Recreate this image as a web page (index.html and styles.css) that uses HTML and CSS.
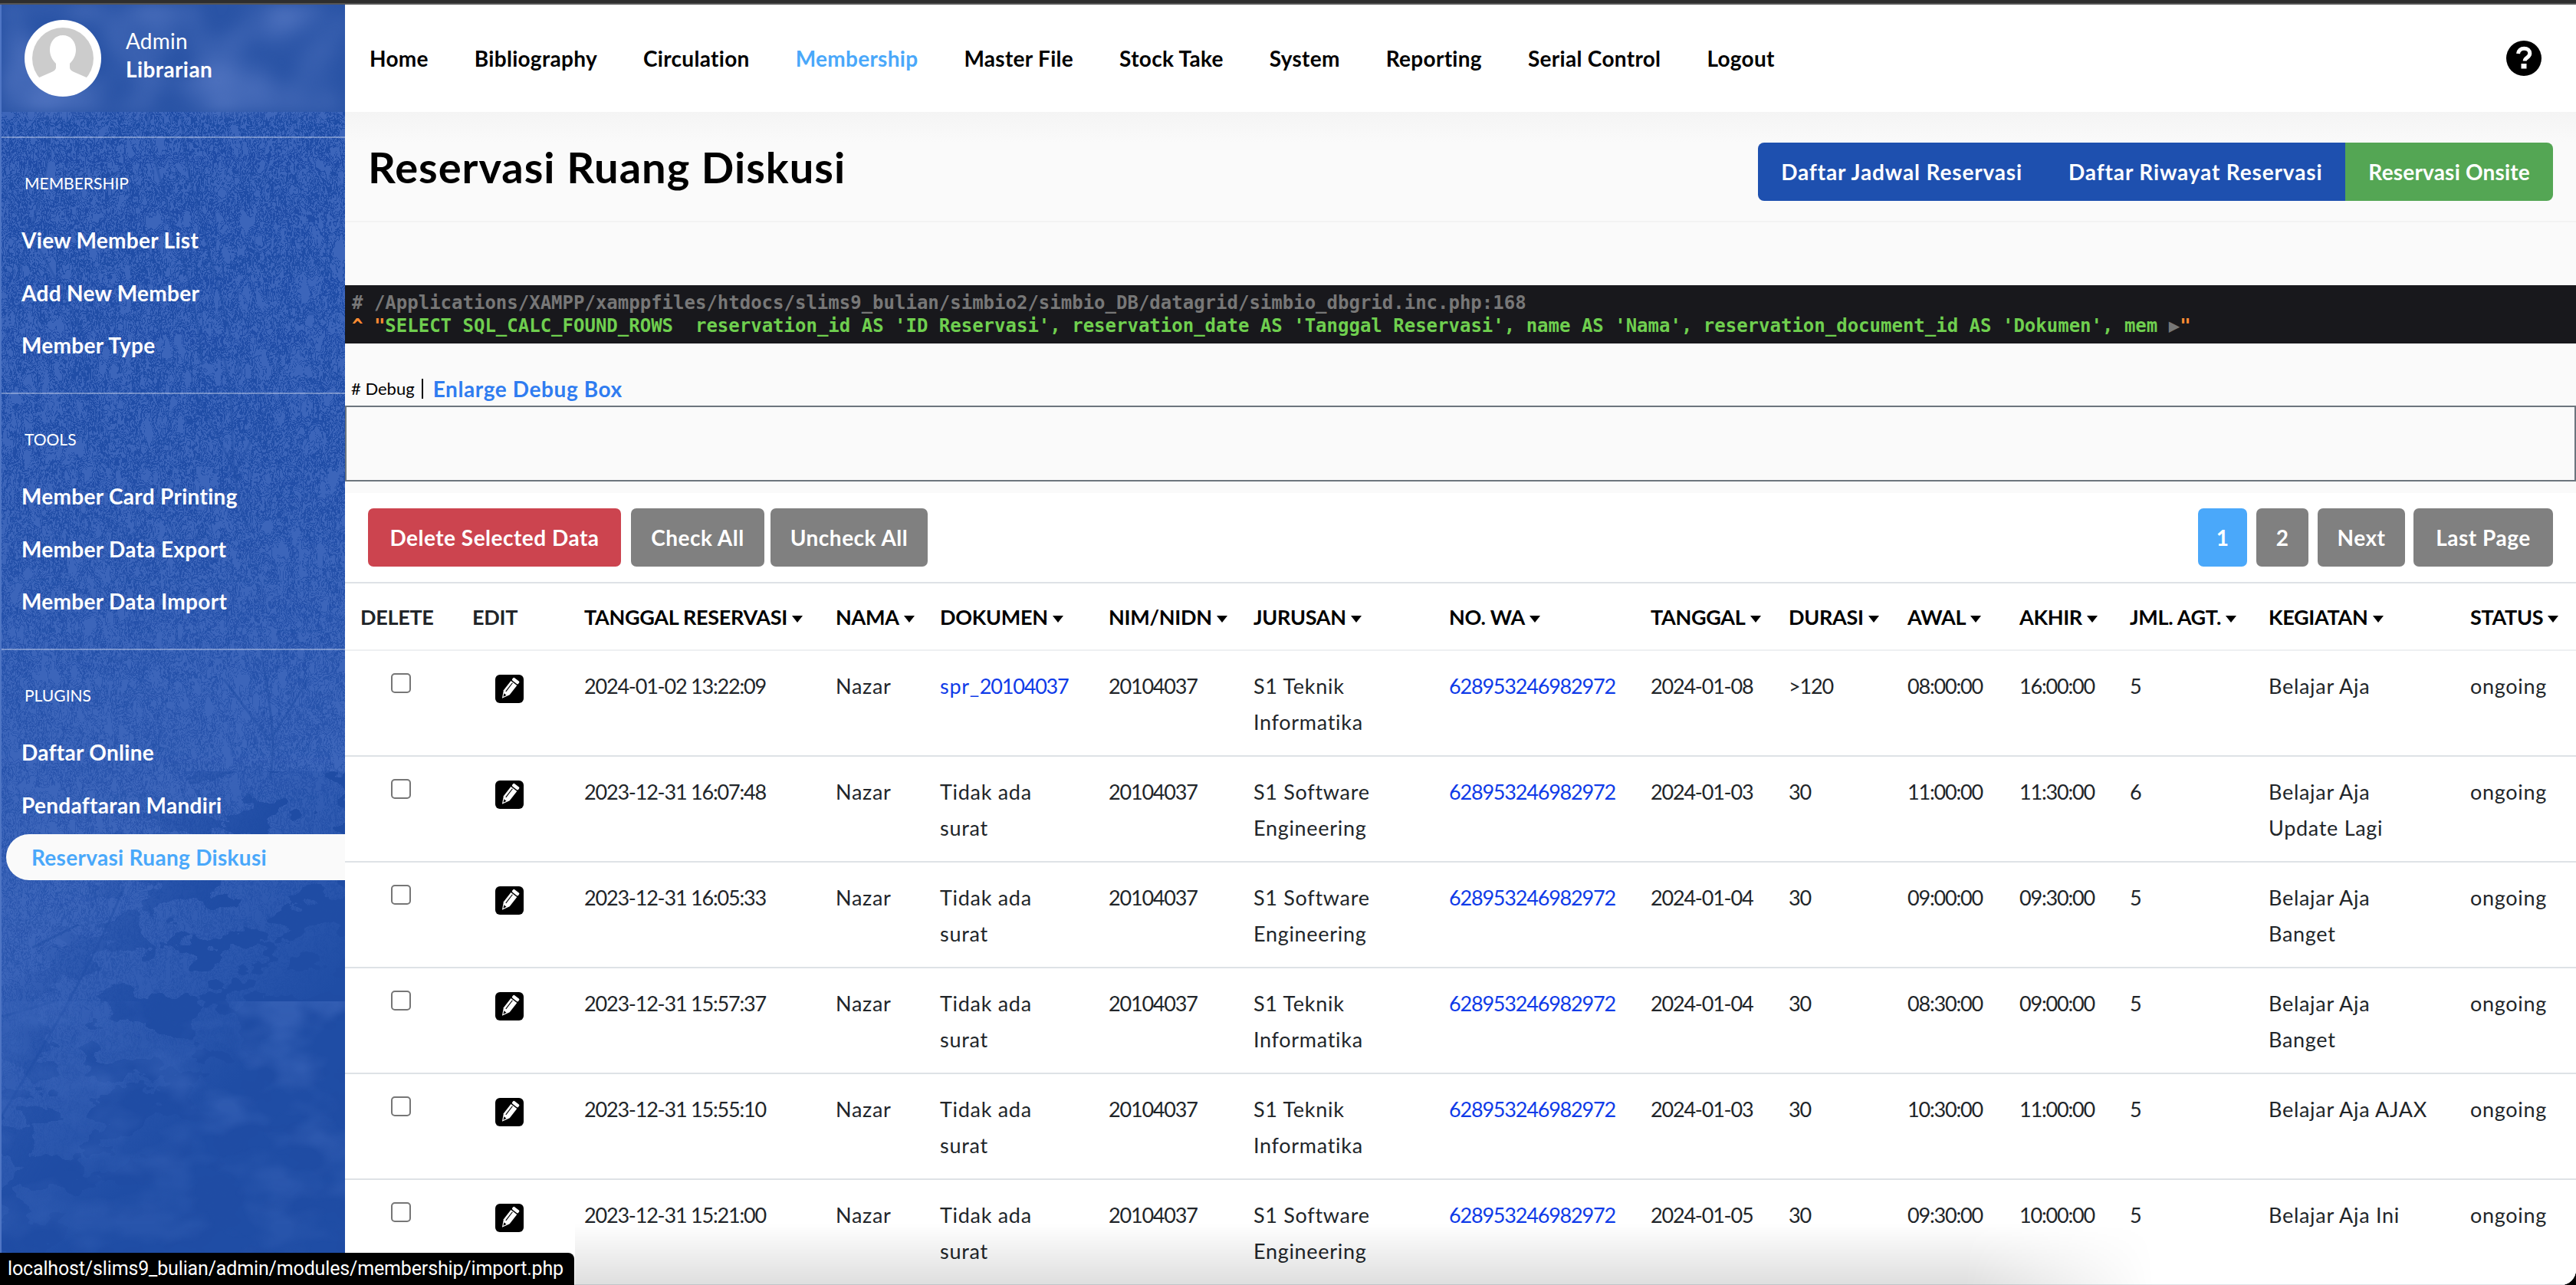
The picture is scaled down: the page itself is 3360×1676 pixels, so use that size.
FILE: index.html
```html
<!DOCTYPE html>
<html lang="en">
<head>
  <meta charset="UTF-8" />
  <title>Reservasi Ruang Diskusi</title>
  <link rel="stylesheet" href="styles.css">
</head>
<body>

<div class="topline"></div>

<div class="app">

  <aside class="sidebar">
    <svg class="side-bg" width="450" height="1670" viewBox="0 0 450 1670" aria-hidden="true">
      <defs>
        <filter id="twigs" x="0" y="0" width="100%" height="100%" color-interpolation-filters="sRGB">
          <feTurbulence type="fractalNoise" baseFrequency="0.04 0.02" numOctaves="4" seed="11"/>
          <feColorMatrix type="matrix" values="0 0 0 0 0.12  0 0 0 0 0.30  0 0 0 0 0.65  1.6 0 0 0 -0.3"/>
          <feComponentTransfer><feFuncA type="discrete" tableValues="0 0 0 0 0 0 0 1 0 1 0 0 1 0 1 0 0 1 0 0 0 0 0 0"/></feComponentTransfer>
        </filter>
        <filter id="twigs2" x="0" y="0" width="100%" height="100%" color-interpolation-filters="sRGB">
          <feTurbulence type="fractalNoise" baseFrequency="0.08 0.03" numOctaves="3" seed="23"/>
          <feColorMatrix type="matrix" values="0 0 0 0 0.12  0 0 0 0 0.30  0 0 0 0 0.65  1.6 0 0 0 -0.3"/>
          <feComponentTransfer><feFuncA type="discrete" tableValues="0 0 0 0 0 0 0 0 1 0 0 1 0 0 1 0 0 0 0 0 0 0 0 0"/></feComponentTransfer>
        </filter>
        <filter id="rock" x="0" y="0" width="100%" height="100%" color-interpolation-filters="sRGB">
          <feTurbulence type="fractalNoise" baseFrequency="0.016 0.024" numOctaves="4" seed="5"/>
          <feColorMatrix type="matrix" values="0 0 0 0 0.12  0 0 0 0 0.30  0 0 0 0 0.645  2.4 0 0 0 -0.75"/>
          <feComponentTransfer><feFuncA type="discrete" tableValues="0 0 0 0 1 1 1 1"/></feComponentTransfer>
        </filter>
        <filter id="swirl" x="0" y="0" width="100%" height="100%" color-interpolation-filters="sRGB">
          <feTurbulence type="fractalNoise" baseFrequency="0.012 0.018" numOctaves="3" seed="8"/>
          <feColorMatrix type="matrix" values="0 0 0 0 0.235  0 0 0 0 0.40  0 0 0 0 0.73  3 0 0 0 -1.3"/>
        </filter>
        <filter id="blotch" x="0" y="0" width="100%" height="100%" color-interpolation-filters="sRGB">
          <feTurbulence type="fractalNoise" baseFrequency="0.012" numOctaves="2" seed="3"/>
          <feColorMatrix type="matrix" values="0 0 0 0 0.30  0 0 0 0 0.44  0 0 0 0 0.74  2.4 0 0 0 -0.9"/>
        </filter>
        <linearGradient id="fadeTwigs" x1="0" y1="0" x2="0" y2="1">
          <stop offset="0" stop-color="#fff"/>
          <stop offset="0.35" stop-color="#fff" stop-opacity="0.9"/>
          <stop offset="0.55" stop-color="#fff" stop-opacity="0.55"/>
          <stop offset="0.8" stop-color="#fff" stop-opacity="0.35"/>
          <stop offset="1" stop-color="#fff" stop-opacity="0"/>
        </linearGradient>
        <linearGradient id="fadeRock" gradientUnits="userSpaceOnUse" x1="100" y1="1120" x2="260" y2="1220">
          <stop offset="0" stop-color="#fff" stop-opacity="0"/>
          <stop offset="1" stop-color="#fff"/>
        </linearGradient>
        <linearGradient id="fadeSwirl" gradientUnits="userSpaceOnUse" x1="0" y1="1300" x2="0" y2="1670">
          <stop offset="0" stop-color="#fff" stop-opacity="0.7"/>
          <stop offset="1" stop-color="#fff" stop-opacity="0.2"/>
        </linearGradient>
        <linearGradient id="deep" gradientUnits="userSpaceOnUse" x1="60" y1="1180" x2="290" y2="1420">
          <stop offset="0" stop-color="#1f4da5" stop-opacity="0"/>
          <stop offset="0.55" stop-color="#1f4da5" stop-opacity="0.45"/>
          <stop offset="1" stop-color="#1f4da5"/>
        </linearGradient>
        <mask id="maskTwigs"><rect width="450" height="1670" fill="url(#fadeTwigs)"/></mask>
        <mask id="maskRock"><rect width="450" height="1670" fill="url(#fadeRock)"/></mask>
        <mask id="maskSwirl"><rect width="450" height="1670" fill="url(#fadeSwirl)"/></mask>
      </defs>
      <rect width="450" height="1670" fill="#3c65ba"/>
      <rect y="140" width="450" height="1530" filter="url(#twigs)" mask="url(#maskTwigs)"/>
      <rect y="140" width="450" height="1530" filter="url(#twigs2)" mask="url(#maskTwigs)"/>
      <g class="trunks">
        <path d="M190 146C200 240 250 330 262 470M235 146C240 240 270 300 300 440"/>
        <path d="M0 240C40 300 80 370 110 440M60 146C70 230 30 300 20 360"/>
        <path d="M290 460C310 540 290 600 320 680M250 500L310 620M350 520L300 620"/>
        <path d="M340 850C350 920 360 960 350 1010M290 880L350 960M400 880L350 960"/>
        <path d="M160 1150C120 1250 60 1350 0 1450M100 1200L40 1230M70 1300L0 1320"/>
      </g>
      <rect y="1000" width="450" height="670" fill="url(#deep)"/>
      <rect y="1000" width="450" height="670" filter="url(#rock)" mask="url(#maskRock)"/>
      <rect y="1300" width="450" height="370" filter="url(#swirl)" mask="url(#maskSwirl)"/>
    </svg>

    <div class="profile">
      <svg class="profile-bg" width="450" height="140" aria-hidden="true">
        <rect width="450" height="140" filter="url(#blotch)"/>
      </svg>
      <svg class="avatar" width="100" height="100" viewBox="0 0 100 100">
        <circle cx="50" cy="50" r="50" fill="#fff"/>
        <circle cx="50" cy="50" r="40" fill="#ccc"/>
        <path d="M50 20c-10 0-17 8-17 19 0 7 3 13 8 18v5c0 3-3 5-8 7l-16 7a40 40 0 0 0 66 0l-16-7c-5-2-8-4-8-7v-5c5-5 8-11 8-18 0-11-7-19-17-19z" fill="#fff"/>
      </svg>
      <div class="profile-text">
        <div class="profile-name">Admin</div>
        <div class="profile-role">Librarian</div>
      </div>
    </div>

    <div class="side-groups">
      <div class="side-group">
        <div class="side-label">MEMBERSHIP</div>
        <a class="side-link">View Member List</a>
        <a class="side-link">Add New Member</a>
        <a class="side-link">Member Type</a>
      </div>
      <div class="side-group">
        <div class="side-label">TOOLS</div>
        <a class="side-link">Member Card Printing</a>
        <a class="side-link">Member Data Export</a>
        <a class="side-link">Member Data Import</a>
      </div>
      <div class="side-group">
        <div class="side-label">PLUGINS</div>
        <a class="side-link">Daftar Online</a>
        <a class="side-link">Pendaftaran Mandiri</a>
        <a class="side-link active">Reservasi Ruang Diskusi</a>
      </div>
    </div>
  </aside>

  <main class="main">

    <nav class="navbar">
      <a>Home</a>
      <a>Bibliography</a>
      <a>Circulation</a>
      <a class="active">Membership</a>
      <a>Master File</a>
      <a>Stock Take</a>
      <a>System</a>
      <a>Reporting</a>
      <a>Serial Control</a>
      <a>Logout</a>
      <svg class="help" width="46" height="46" viewBox="0 0 46 46">
        <circle cx="23" cy="23" r="23" fill="#000"/>
        <path d="M15.5 17c.6-4.500 3.800-6.800 7.800-6.800 4.300 0 7.500 2.600 7.500 6.300 0 3-1.800 4.400-3.600 5.700-1.700 1.200-3 2-3 4.300" fill="none" stroke="#fff" stroke-width="5"/>
        <rect x="19.500" y="30" width="7" height="6.500" fill="#fff"/>
      </svg>
    </nav>

    <header class="page-head">
      <h1>Reservasi Ruang Diskusi</h1>
      <div class="btn-group">
        <a class="btn-tab">Daftar Jadwal Reservasi</a>
        <a class="btn-tab">Daftar Riwayat Reservasi</a>
        <a class="btn-tab green">Reservasi Onsite</a>
      </div>
    </header>

    <pre class="dump"><span class="d-gray"># /Applications/XAMPP/xamppfiles/htdocs/slims9_bulian/simbio2/simbio_DB/datagrid/simbio_dbgrid.inc.php:168</span>
<span class="d-orange">^ "</span><span class="d-green">SELECT SQL_CALC_FOUND_ROWS  reservation_id AS 'ID Reservasi', reservation_date AS 'Tanggal Reservasi', name AS 'Nama', reservation_document_id AS 'Dokumen', mem </span><span class="d-gray">▶</span><span class="d-orange">"</span></pre>

    <div class="debug-head">
      <span class="debug-name"># Debug</span>
      <a class="debug-link">Enlarge Debug Box</a>
    </div>
    <div class="debug-box"></div>

    <section class="grid-wrap">
      <div class="toolbar">
        <div class="tools-left">
          <a class="btn red w-delete">Delete Selected Data</a>
          <a class="btn gray w-check">Check All</a>
          <a class="btn gray w-uncheck">Uncheck All</a>
        </div>
        <div class="pager">
          <a class="btn blue w-p1">1</a>
          <a class="btn gray w-p2">2</a>
          <a class="btn gray w-next">Next</a>
          <a class="btn gray w-last">Last Page</a>
        </div>
      </div>

      <table class="grid">
        <colgroup>
          <col class="c-del"><col class="c-edit"><col class="c-res"><col class="c-nama"><col class="c-dok">
          <col class="c-nim"><col class="c-jur"><col class="c-wa"><col class="c-tgl"><col class="c-dur">
          <col class="c-awal"><col class="c-akhir"><col class="c-jml"><col class="c-keg"><col class="c-stat">
        </colgroup>
        <thead>
          <tr>
            <th class="plain">DELETE</th>
            <th class="plain">EDIT</th>
            <th class="sort">TANGGAL RESERVASI</th>
            <th class="sort">NAMA</th>
            <th class="sort">DOKUMEN</th>
            <th class="sort">NIM/NIDN</th>
            <th class="sort">JURUSAN</th>
            <th class="sort">NO. WA</th>
            <th class="sort">TANGGAL</th>
            <th class="sort">DURASI</th>
            <th class="sort">AWAL</th>
            <th class="sort">AKHIR</th>
            <th class="sort">JML. AGT.</th>
            <th class="sort">KEGIATAN</th>
            <th class="sort">STATUS</th>
          </tr>
        </thead>
        <tbody>
          <tr>
            <td><input type="checkbox" class="check"></td>
            <td><svg class="edit" viewBox="0 0 37 37"><use href="#pencil"/></svg></td>
            <td class="num">2024-01-02 13:22:09</td><td>Nazar</td><td><a class="link">spr_<span class="num">20104037</span></a></td><td class="num">20104037</td>
            <td>S1 Teknik Informatika</td><td class="num"><a class="link">628953246982972</a></td><td class="num">2024-01-08</td><td class="num">&gt;120</td>
            <td class="num">08:00:00</td><td class="num">16:00:00</td><td class="num">5</td><td>Belajar Aja</td><td>ongoing</td>
          </tr>
          <tr>
            <td><input type="checkbox" class="check"></td>
            <td><svg class="edit" viewBox="0 0 37 37"><use href="#pencil"/></svg></td>
            <td class="num">2023-12-31 16:07:48</td><td>Nazar</td><td>Tidak ada surat</td><td class="num">20104037</td>
            <td>S1 Software Engineering</td><td class="num"><a class="link">628953246982972</a></td><td class="num">2024-01-03</td><td class="num">30</td>
            <td class="num">11:00:00</td><td class="num">11:30:00</td><td class="num">6</td><td>Belajar Aja Update Lagi</td><td>ongoing</td>
          </tr>
          <tr>
            <td><input type="checkbox" class="check"></td>
            <td><svg class="edit" viewBox="0 0 37 37"><use href="#pencil"/></svg></td>
            <td class="num">2023-12-31 16:05:33</td><td>Nazar</td><td>Tidak ada surat</td><td class="num">20104037</td>
            <td>S1 Software Engineering</td><td class="num"><a class="link">628953246982972</a></td><td class="num">2024-01-04</td><td class="num">30</td>
            <td class="num">09:00:00</td><td class="num">09:30:00</td><td class="num">5</td><td>Belajar Aja Banget</td><td>ongoing</td>
          </tr>
          <tr>
            <td><input type="checkbox" class="check"></td>
            <td><svg class="edit" viewBox="0 0 37 37"><use href="#pencil"/></svg></td>
            <td class="num">2023-12-31 15:57:37</td><td>Nazar</td><td>Tidak ada surat</td><td class="num">20104037</td>
            <td>S1 Teknik Informatika</td><td class="num"><a class="link">628953246982972</a></td><td class="num">2024-01-04</td><td class="num">30</td>
            <td class="num">08:30:00</td><td class="num">09:00:00</td><td class="num">5</td><td>Belajar Aja Banget</td><td>ongoing</td>
          </tr>
          <tr>
            <td><input type="checkbox" class="check"></td>
            <td><svg class="edit" viewBox="0 0 37 37"><use href="#pencil"/></svg></td>
            <td class="num">2023-12-31 15:55:10</td><td>Nazar</td><td>Tidak ada surat</td><td class="num">20104037</td>
            <td>S1 Teknik Informatika</td><td class="num"><a class="link">628953246982972</a></td><td class="num">2024-01-03</td><td class="num">30</td>
            <td class="num">10:30:00</td><td class="num">11:00:00</td><td class="num">5</td><td>Belajar Aja AJAX</td><td>ongoing</td>
          </tr>
          <tr>
            <td><input type="checkbox" class="check"></td>
            <td><svg class="edit" viewBox="0 0 37 37"><use href="#pencil"/></svg></td>
            <td class="num">2023-12-31 15:21:00</td><td>Nazar</td><td>Tidak ada surat</td><td class="num">20104037</td>
            <td>S1 Software Engineering</td><td class="num"><a class="link">628953246982972</a></td><td class="num">2024-01-05</td><td class="num">30</td>
            <td class="num">09:30:00</td><td class="num">10:00:00</td><td class="num">5</td><td>Belajar Aja Ini</td><td>ongoing</td>
          </tr>
        </tbody>
      </table>
    </section>
  </main>
</div>

<svg class="sprite" width="0" height="0" aria-hidden="true">
  <symbol id="pencil" viewBox="0 0 37 37">
    <rect width="37" height="37" rx="6" fill="#000"/>
    <g transform="rotate(38 18.500 18.500)">
      <rect x="13.500" y="3" width="10" height="4.500" rx="1.500" fill="#fff"/>
      <path d="M13.500 9h10v15.500l-5 9.500-5-9.500z" fill="#fff"/>
      <path d="M16.800 10v14" stroke="#000" stroke-width="1.200"/>
      <path d="M16.500 27.500h4l-2 4z" fill="#000"/>
    </g>
  </symbol>
</svg>

<div class="bottom-shade"></div>
<div class="status-tip">localhost/slims9_bulian/admin/modules/membership/import.php</div>

</body>
</html>
```

FILE: styles.css
```css
html, body {
  margin: 0; padding: 0;
  width: 3360px; height: 1676px;
  overflow: hidden;
  background: #000;
  font-family: "Lato", "Open Sans", sans-serif;
  color: #212529;
}
a { text-decoration: none; color: inherit; }
.sprite { position: absolute; }

.topline {
  height: 4px;
  background: #2e2e2e;
  border-bottom: 2px solid #555;
}
.app {
  display: flex;
  height: 1670px;
  background: #fff;
  border-bottom-right-radius: 20px;
  overflow: hidden;
}

/* sidebar */
.sidebar {
  width: 450px;
  flex: none;
  position: relative;
  color: #fff;
  overflow: hidden;
  border-left: 2px solid #4f75c4;
  box-sizing: border-box;
}
.side-bg { position: absolute; left: 0; top: 0; }
.trunks path { fill: none; stroke: #1f4da5; stroke-width: 3; opacity: .5; }

.profile {
  position: relative;
  height: 140px;
  display: flex;
  align-items: center;
  padding-left: 30px;
  gap: 32px;
  box-sizing: border-box;
  background: #2a54a6;
}
.profile-bg { position: absolute; left: 0; top: 0; filter: blur(8px); }
.avatar, .profile-text { position: relative; }
.profile-text { padding-bottom: 8px; }
.profile-name { font-size: 28px; line-height: 37px; font-weight: 400; letter-spacing: .2px; }
.profile-role { font-size: 28px; line-height: 37px; font-weight: 700; letter-spacing: .4px; }

.side-groups { position: relative; padding-top: 32px; }
.side-group {
  height: 334px;
  box-sizing: border-box;
  padding-top: 34px;
  border-top: 2px solid rgba(255,255,255,.35);
}
.side-label {
  font-size: 21px;
  line-height: 50px;
  padding-left: 30px;
  margin-bottom: 19px;
}
.side-link {
  display: block;
  font-size: 28px;
  font-weight: 700;
  letter-spacing: .3px;
  line-height: 60px;
  height: 60px;
  margin-bottom: 8.500px;
  padding-left: 26px;
}
.side-link.active {
  margin-left: 6px;
  padding-left: 33px;
  background: #fafafa;
  color: #4aa8fa;
  border-radius: 30px 0 0 30px;
}

/* main column */
.main {
  flex: 1;
  min-width: 0;
  background: #fafafa;
}

.navbar {
  height: 140px;
  background: #fff;
  display: flex;
  align-items: center;
  gap: 60px;
  padding: 0 45px 0 32px;
  box-sizing: border-box;
  font-size: 28px;
  font-weight: 700;
  letter-spacing: .3px;
  color: #000;
}
.navbar .active { color: #4aa8fa; }
.navbar .help { margin-left: auto; }

.page-head {
  height: 144px;
  box-sizing: border-box;
  padding: 40px 30px 0;
  display: flex;
  justify-content: space-between;
  align-items: flex-start;
  border-bottom: 2px solid #f3f3f3;
  background: linear-gradient(#f4f4f4, #fafafa 40px);
}
.page-head h1 {
  margin: 0;
  font-size: 56px;
  line-height: 64px;
  font-weight: 700;
  letter-spacing: 1px;
  color: #000;
}
.btn-group { display: flex; height: 76px; border-radius: 8px; overflow: hidden; }
.btn-tab {
  display: flex;
  align-items: center;
  padding: 0 30px;
  background: #1e50af;
  color: #fff;
  font-size: 28px;
  font-weight: 700;
  letter-spacing: .86px;
}
.btn-tab.green { background: #54a654; letter-spacing: .2px; }

.dump {
  margin: 82px 0 0;
  height: 76px;
  box-sizing: border-box;
  padding: 8px 9px;
  background: #18181c;
  font-family: "DejaVu Sans Mono", monospace;
  font-weight: 700;
  font-size: 24px;
  line-height: 30px;
  white-space: pre;
  overflow: hidden;
}
.d-gray { color: #777; }
.d-orange { color: #ff8c33; }
.d-green { color: #6fcf4f; }

.debug-head {
  height: 81px;
  box-sizing: border-box;
  padding: 38px 0 2px 8px;
  display: flex;
  align-items: center;
}
.debug-name {
  font-size: 22px;
  color: #000;
  padding-right: 9px;
  border-right: 2px solid #000;
  line-height: 26px;
  margin-right: 13px;
}
.debug-link { font-size: 28px; font-weight: 700; letter-spacing: .6px; color: #2f7cf0; }
.debug-box {
  height: 99px;
  box-sizing: border-box;
  border: 2px solid #6c757d;
  margin-bottom: 15px;
}

.grid-wrap { background: #fff; }
.toolbar {
  display: flex;
  justify-content: space-between;
  padding: 20px 30px;
  height: 116px;
  box-sizing: border-box;
}
.tools-left, .pager { display: flex; }
.btn {
  display: flex;
  align-items: center;
  justify-content: center;
  height: 76px;
  border-radius: 7px;
  color: #fff;
  font-size: 28px;
  font-weight: 700;
  letter-spacing: .5px;
}
.red { background: #cc444f; }
.gray { background: #808080; }
.blue { background: #4aa8fa; }
.w-delete { width: 330px; margin-right: 13px; }
.w-check { width: 174px; margin-right: 8px; }
.w-uncheck { width: 205px; }
.w-p1 { width: 64px; margin-right: 12px; }
.w-p2 { width: 68px; margin-right: 12px; }
.w-next { width: 114px; margin-right: 11px; }
.w-last { width: 182px; }

/* datagrid */
.grid {
  table-layout: fixed;
  width: 2910px;
  border-collapse: separate;
  border-spacing: 0;
  font-size: 27px;
  letter-spacing: .7px;
}
.c-del { width: 146px; } .c-edit { width: 146px; } .c-res { width: 328px; }
.c-nama { width: 136px; } .c-dok { width: 220px; } .c-nim { width: 189px; }
.c-jur { width: 255px; } .c-wa { width: 263px; } .c-tgl { width: 180px; }
.c-dur { width: 155px; } .c-awal { width: 146px; } .c-akhir { width: 144px; }
.c-jml { width: 181px; } .c-keg { width: 263px; } .c-stat { width: 158px; }

.grid th {
  height: 90px;
  box-sizing: border-box;
  padding: 0 20px;
  text-align: left;
  font-weight: 700;
  letter-spacing: -.3px;
  color: #000;
  white-space: nowrap;
  border-top: 2px solid #dee2e6;
  border-bottom: 2px solid #eef0f2;
}
.grid th.plain { color: #212529; }
.sort::after {
  content: "";
  display: inline-block;
  margin-left: 6px;
  vertical-align: 3px;
  border-left: 7px solid transparent;
  border-right: 7px solid transparent;
  border-top: 9px solid #000;
}
.grid td {
  height: 138px;
  box-sizing: border-box;
  padding: 22px 20px 20px;
  line-height: 47px;
  vertical-align: top;
  border-bottom: 2px solid #dee2e6;
}
.num { letter-spacing: -1.2px; white-space: nowrap; }
.link { color: #0f3be8; }
.check {
  appearance: none;
  display: block;
  width: 26px; height: 26px;
  margin: 7px auto 0;
  background: #fff;
  border: 2px solid #767676;
  border-radius: 5px;
  box-sizing: border-box;
}
.edit { display: block; width: 37px; height: 37px; margin: 9px 0 0 30px; }

/* browser chrome bits lying over the page */
.bottom-shade {
  position: absolute;
  left: 750px; bottom: 0;
  width: 2060px; height: 80px;
  background: linear-gradient(rgba(0,0,0,0), rgba(0,0,0,.13));
  mask-image: linear-gradient(to right, #000 88%, transparent);
  pointer-events: none;
}
.status-tip {
  position: absolute;
  left: 0; bottom: 0;
  width: 749px; height: 42px;
  box-sizing: border-box;
  padding-left: 10px;
  background: #000;
  color: #fff;
  border-top-right-radius: 8px;
  font-family: "Roboto", sans-serif;
  font-size: 25px;
  letter-spacing: -.15px;
  line-height: 42px;
  white-space: nowrap;
}
```
